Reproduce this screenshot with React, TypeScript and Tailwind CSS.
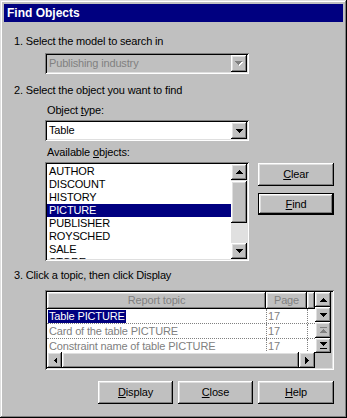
import React from "react";

const raised =
  "shadow-[inset_-1px_-1px_#000,inset_1px_1px_#fff,inset_-2px_-2px_#808080,inset_2px_2px_#dfdfdf]";
const sunken =
  "shadow-[inset_1px_1px_#808080,inset_-1px_-1px_#fff,inset_2px_2px_#000,inset_-2px_-2px_#dfdfdf]";

function Tri({ dir, color = "#000", bar }: { dir: "up" | "down" | "left" | "right"; color?: string; bar?: "top" | "bottom" }) {
  if (dir === "left" || dir === "right") {
    const pts = dir === "left" ? "4,0 4,7 0.5,3.5" : "0,0 0,7 3.5,3.5";
    return (
      <svg width="4" height="7" viewBox="0 0 4 7" shapeRendering="crispEdges">
        <polygon points={pts} fill={color} />
      </svg>
    );
  }
  const h = bar ? 7 : 4;
  const triY = bar === "top" ? 2 : 0;
  const pts =
    dir === "up"
      ? `3.5,${triY} 7,${triY + 4} 0,${triY + 4}`
      : `0,${triY} 7,${triY} 3.5,${triY + 4}`;
  return (
    <svg width="7" height={h} viewBox={`0 0 7 ${h}`} shapeRendering="crispEdges">
      <polygon points={pts} fill={color} />
      {bar === "top" && <rect x="0" y="0" width="7" height="1" fill={color} />}
      {bar === "bottom" && <rect x="0" y="6" width="7" height="1" fill={color} />}
    </svg>
  );
}

function Combo({ value, disabled }: { value: string; disabled?: boolean }) {
  return (
    <div
      className={`ml-[31px] w-[204px] h-[21px] flex items-center p-[2px] ${sunken} ${
        disabled ? "bg-[#c0c0c0]" : "bg-white"
      }`}
    >
      <div className={`flex-1 pl-[2px] ${disabled ? "text-[#808080]" : "text-black"}`}>{value}</div>
      <div className={`w-[16px] h-[17px] flex items-center justify-center bg-[#c0c0c0] ${raised}`}>
        {disabled ? (
          <div className="relative w-[8px] h-[5px]">
            <div className="absolute left-[1px] top-[1px]">
              <Tri dir="down" color="#fff" />
            </div>
            <div className="absolute left-0 top-0">
              <Tri dir="down" color="#808080" />
            </div>
          </div>
        ) : (
          <Tri dir="down" />
        )}
      </div>
    </div>
  );
}

function Btn({ children, def, w = "w-[75px]", h = "h-[23px]" }: { children: React.ReactNode; def?: boolean; w?: string; h?: string }) {
  if (def) {
    return (
      <div className={`${w} ${h} border border-black`}>
        <div className={`w-full h-full flex items-center justify-center bg-[#c0c0c0] ${raised}`}>{children}</div>
      </div>
    );
  }
  return <div className={`${w} ${h} flex items-center justify-center bg-[#c0c0c0] ${raised}`}>{children}</div>;
}

const items = ["AUTHOR", "DISCOUNT", "HISTORY", "PICTURE", "PUBLISHER", "ROYSCHED", "SALE", "STORE"];

export default function App() {
  return (
    <div
      className={`w-[347px] h-[418px] bg-[#c0c0c0] p-[4px] flex flex-col font-['Liberation_Sans',Arial,sans-serif] text-[11px] leading-[13px] tracking-[-0.15px] text-black shadow-[inset_-1px_-1px_#000,inset_1px_1px_#dfdfdf,inset_-2px_-2px_#808080,inset_2px_2px_#fff]`}
    >
      {/* Title bar */}
      <div className="h-[18px] bg-[#000080] flex items-center pl-[3px]">
        <span className="text-white font-bold text-[12px] tracking-[0px]">Find Objects</span>
      </div>

      <div className="ml-[10px] w-[320px] flex flex-col">
        {/* Section 1 */}
        <div className="mt-[13px] h-[13px]">1. Select the model to search in</div>
        <div className="mt-[5px]">
          <Combo value="Publishing industry" disabled />
        </div>

        {/* Section 2 */}
        <div className="mt-[10px] h-[13px]">2. Select the object you want to find</div>
        <div className="mt-[7px] ml-[33px] h-[13px]">
          Object <span className="underline">t</span>ype:
        </div>
        <div className="mt-[3px]">
          <Combo value="Table" />
        </div>
        <div className="mt-[5px] ml-[33px] h-[13px]">
          Available <span className="underline">o</span>bjects:
        </div>

        <div className="mt-[3px] flex items-start">
          {/* Listbox */}
          <div className={`ml-[31px] w-[204px] h-[99px] bg-white p-[2px] flex ${sunken}`}>
            <div className="flex-1 overflow-hidden pt-[1px]">
              {items.map((it) => (
                <div
                  key={it}
                  className={`h-[13px] pl-[2px] ${it === "PICTURE" ? "bg-[#000080] text-white" : ""}`}
                >
                  {it}
                </div>
              ))}
            </div>
            <div className="w-[16px] flex flex-col bg-[#e0e0e0]">
              <div className={`h-[16px] flex items-center justify-center bg-[#c0c0c0] ${raised}`}>
                <Tri dir="up" />
              </div>
              <div className="flex-1 pt-[1px]">
                <div className={`h-[42px] bg-[#c0c0c0] ${raised}`} />
              </div>
              <div className={`h-[16px] flex items-center justify-center bg-[#c0c0c0] ${raised}`}>
                <Tri dir="down" />
              </div>
            </div>
          </div>
          {/* Side buttons */}
          <div className="ml-[9px] flex flex-col">
            <div className="mt-[1px]">
              <Btn w="w-[76px]">
                <span>
                  <span className="underline">C</span>lear
                </span>
              </Btn>
            </div>
            <div className="mt-[7px]">
              <Btn def w="w-[76px]" h="h-[22px]">
                <span>
                  <span className="underline">F</span>ind
                </span>
              </Btn>
            </div>
          </div>
        </div>

        {/* Section 3 */}
        <div className="mt-[8px] h-[13px]">3. Click a topic, then click Display</div>

        <div className={`mt-[8px] ml-[31px] w-[289px] h-[80px] p-[2px] flex ${sunken}`}>
          <div className="w-[268px] flex flex-col">
            {/* header */}
            <div className="h-[17px] flex text-[#808080]">
              <div className={`w-[219px] flex items-center justify-center bg-[#c0c0c0] ${raised}`}>Report topic</div>
              <div className={`w-[41px] flex items-center justify-center bg-[#c0c0c0] ${raised}`}>Page</div>
              <div className={`w-[8px] bg-[#c0c0c0] ${raised}`} />
            </div>
            {/* rows */}
            <div className="h-[43px] bg-white overflow-hidden">
              {[
                { t: "Table PICTURE", sel: true },
                { t: "Card of the table PICTURE" },
                { t: "Constraint name of table PICTURE" },
              ].map((r) => (
                <div key={r.t} className="h-[15px] flex border-b border-dotted border-[#808080]">
                  <div className="w-[219px] pl-[1px] flex items-center">
                    {r.sel ? (
                      <span className="bg-[#000080] text-white px-[1px] leading-[13px]">{r.t}</span>
                    ) : (
                      <span className="text-[#808080] pl-[1px]">{r.t}</span>
                    )}
                  </div>
                  <div className="w-[41px] border-l border-dotted border-[#808080] pl-[1px] flex items-center text-[#808080]">
                    17
                  </div>
                  <div className="w-[8px] border-l border-dotted border-[#808080]" />
                </div>
              ))}
            </div>
            {/* horizontal scroll */}
            <div className="h-[16px] flex">
              <div className={`w-[15px] flex items-center justify-center bg-[#c0c0c0] ${raised}`}>
                <Tri dir="left" />
              </div>
              <div className={`flex-1 bg-[#c0c0c0] ${raised}`} />
              <div className={`w-[16px] flex items-center justify-center bg-[#c0c0c0] ${raised}`}>
                <Tri dir="right" />
              </div>
            </div>
          </div>
          {/* vertical buttons */}
          <div className="w-[16px] flex flex-col">
            <div className={`h-[15px] flex items-center justify-center bg-[#c0c0c0] ${raised}`}>
              <Tri dir="up" />
            </div>
            <div className={`h-[15px] flex items-center justify-center bg-[#c0c0c0] ${raised}`}>
              <Tri dir="down" />
            </div>
            <div className={`h-[16px] flex items-center justify-center bg-[#c0c0c0] ${raised}`}>
              <Tri dir="up" bar="top" color="#808080" />
            </div>
            <div className={`h-[15px] flex items-center justify-center bg-[#c0c0c0] ${raised}`}>
              <Tri dir="down" bar="bottom" />
            </div>
          </div>
        </div>

        {/* Bottom buttons */}
        <div className="mt-[11px] flex justify-end gap-[5px]">
          <Btn>
            <span>
              <span className="underline">D</span>isplay
            </span>
          </Btn>
          <Btn>
            <span>
              <span className="underline">C</span>lose
            </span>
          </Btn>
          <Btn w="w-[76px]">
            <span>
              <span className="underline">H</span>elp
            </span>
          </Btn>
        </div>
      </div>
    </div>
  );
}
